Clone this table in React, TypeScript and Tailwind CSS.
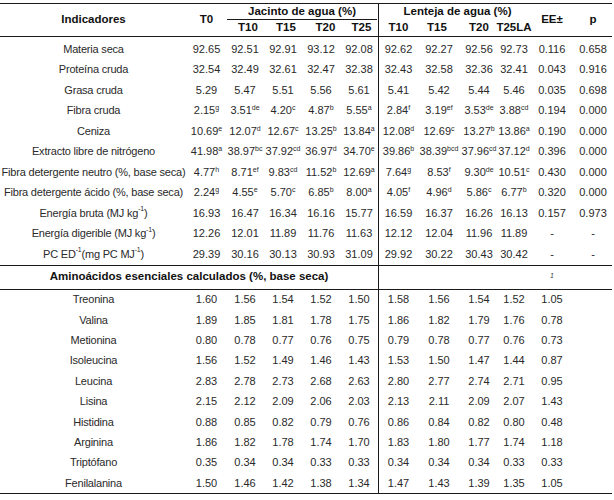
import React from "react";

const COLS =
  "grid grid-cols-[187px_39px_38px_38px_38px_38px_40px_42px_38px_32px_44px_38px]";

function Val({ v }: { v: string }) {
  const [n, s] = v.split("^");
  return (
    <span className="whitespace-nowrap">
      {n}
      {s ? <sup className="text-[7px] top-[-4px]">{s}</sup> : null}
    </span>
  );
}

type RowProps = {
  label: React.ReactNode;
  vals: string[];
  first?: boolean;
  tall?: boolean;
};

function Row({ label, vals, first, tall }: RowProps) {
  return (
    <div className={`${COLS} ${first ? "h-[22.5px]" : tall ? "h-[20.5px]" : "h-[20.4px]"}`}>
      <div
        className={`flex items-center justify-center whitespace-nowrap tracking-[-0.2px] ${first ? "pt-[2px]" : ""}`}
      >
        {label}
      </div>
      {vals.map((v, i) => (
        <div
          key={i}
          className={`flex items-center justify-center ${i === 5 ? "border-l border-[#1a1a1a]" : ""} ${first ? "pt-[2px]" : ""}`}
        >
          <Val v={v} />
        </div>
      ))}
    </div>
  );
}

const m1 = <sup className="text-[7px] top-[-4px]">-1</sup>;

const main: { label: React.ReactNode; vals: string[] }[] = [
  { label: "Materia seca", vals: ["92.65", "92.51", "92.91", "93.12", "92.08", "92.62", "92.27", "92.56", "92.73", "0.116", "0.658"] },
  { label: "Proteína cruda", vals: ["32.54", "32.49", "32.61", "32.47", "32.38", "32.43", "32.58", "32.36", "32.41", "0.043", "0.916"] },
  { label: "Grasa cruda", vals: ["5.29", "5.47", "5.51", "5.56", "5.61", "5.41", "5.42", "5.44", "5.46", "0.035", "0.698"] },
  { label: "Fibra cruda", vals: ["2.15^g", "3.51^de", "4.20^c", "4.87^b", "5.55^a", "2.84^f", "3.19^ef", "3.53^de", "3.88^cd", "0.194", "0.000"] },
  { label: "Ceniza", vals: ["10.69^e", "12.07^d", "12.67^c", "13.25^b", "13.84^a", "12.08^d", "12.69^c", "13.27^b", "13.86^a", "0.190", "0.000"] },
  { label: "Extracto libre de nitrógeno", vals: ["41.98^a", "38.97^bc", "37.92^cd", "36.97^d", "34.70^e", "39.86^b", "38.39^bcd", "37.96^cd", "37.12^d", "0.396", "0.000"] },
  { label: "Fibra detergente neutro (%, base seca)", vals: ["4.77^h", "8.71^ef", "9.83^cd", "11.52^b", "12.69^a", "7.64^g", "8.53^f", "9.30^de", "10.51^c", "0.430", "0.000"] },
  { label: "Fibra detergente ácido (%, base seca)", vals: ["2.24^g", "4.55^e", "5.70^c", "6.85^b", "8.00^a", "4.05^f", "4.96^d", "5.86^c", "6.77^b", "0.320", "0.000"] },
  { label: <>Energía bruta (MJ kg{m1})</>, vals: ["16.93", "16.47", "16.34", "16.16", "15.77", "16.59", "16.37", "16.26", "16.13", "0.157", "0.973"] },
  { label: <>Energía digerible (MJ kg{m1})</>, vals: ["12.26", "12.01", "11.89", "11.76", "11.63", "12.12", "12.04", "11.96", "11.89", "-", "-"] },
  { label: <>PC ED{m1} (mg PC MJ{m1})</>, vals: ["29.39", "30.16", "30.13", "30.93", "31.09", "29.92", "30.22", "30.43", "30.42", "-", "-"] },
];

const amino: [string, string[]][] = [
  ["Treonina", ["1.60", "1.56", "1.54", "1.52", "1.50", "1.58", "1.56", "1.54", "1.52", "1.05", ""]],
  ["Valina", ["1.89", "1.85", "1.81", "1.78", "1.75", "1.86", "1.82", "1.79", "1.76", "0.78", ""]],
  ["Metionina", ["0.80", "0.78", "0.77", "0.76", "0.75", "0.79", "0.78", "0.77", "0.76", "0.73", ""]],
  ["Isoleucina", ["1.56", "1.52", "1.49", "1.46", "1.43", "1.53", "1.50", "1.47", "1.44", "0.87", ""]],
  ["Leucina", ["2.83", "2.78", "2.73", "2.68", "2.63", "2.80", "2.77", "2.74", "2.71", "0.95", ""]],
  ["Lisina", ["2.15", "2.12", "2.09", "2.06", "2.03", "2.13", "2.11", "2.09", "2.07", "1.43", ""]],
  ["Histidina", ["0.88", "0.85", "0.82", "0.79", "0.76", "0.86", "0.84", "0.82", "0.80", "0.48", ""]],
  ["Arginina", ["1.86", "1.82", "1.78", "1.74", "1.70", "1.83", "1.80", "1.77", "1.74", "1.18", ""]],
  ["Triptófano", ["0.35", "0.34", "0.34", "0.33", "0.33", "0.34", "0.34", "0.34", "0.33", "0.33", ""]],
  ["Fenilalanina", ["1.50", "1.46", "1.42", "1.38", "1.34", "1.47", "1.43", "1.39", "1.35", "1.05", ""]],
];

export default function App() {
  const hc = "flex items-center justify-center whitespace-nowrap font-bold text-[11.5px] text-[#111]";
  return (
    <div className="w-[614px] h-[500px] bg-white font-['Liberation_Sans',Arial,sans-serif] text-[11px] leading-none text-[#2a2a2a]">
      <div className="w-[612px] pt-[3px]">
        {/* Header */}
        <div className={`${COLS} grid-rows-[16px_16px] border-y border-[#1a1a1a]`}>
          <div className={`${hc} row-span-2`}>Indicadores</div>
          <div className={`${hc} row-span-2`}>T0</div>
          <div className={`${hc} col-span-4 mx-[1px] border-b border-[#1a1a1a]`}>Jacinto de agua (%)</div>
          <div className={`${hc} col-span-4 border-l border-[#1a1a1a] pl-[6px]`}>Lenteja de agua (%)</div>
          <div className={`${hc} row-span-2 pb-[1px]`}>EE±</div>
          <div className={`${hc} row-span-2`}>p</div>
          <div className={`${hc} pl-[6px]`}>T10</div>
          <div className={`${hc} pl-[6px]`}>T15</div>
          <div className={`${hc} pl-[9px]`}>T20</div>
          <div className={`${hc} pl-[5px]`}>T25</div>
          <div className={`${hc} border-l border-[#1a1a1a]`}>T10</div>
          <div className={`${hc} pr-[4px]`}>T15</div>
          <div className={`${hc}`}>T20</div>
          <div className={`${hc}`}>T25LA</div>
        </div>

        {/* Main block */}
        <div className="flex flex-col">
          {main.map((r, i) => (
            <Row key={i} label={r.label} vals={r.vals} first={i === 0} tall />
          ))}
        </div>

        {/* Amino acid heading */}
        <div className={`${COLS} h-[25px] border-y border-[#1a1a1a]`}>
          <div className="col-span-6 flex items-center justify-center whitespace-nowrap font-bold text-[11.5px] text-[#111]">
            Aminoácidos esenciales calculados (%, base seca)
          </div>
          <div className="border-l border-[#1a1a1a]" />
          <div />
          <div />
          <div />
          <div className="flex items-center justify-center pb-[3px]">
            <span className="italic text-[7px] text-[#444]">1</span>
          </div>
          <div />
        </div>

        {/* Amino rows */}
        <div className="flex flex-col border-b border-[#1a1a1a]">
          {amino.map(([l, v], i) => (
            <Row key={i} label={l} vals={v} />
          ))}
        </div>
      </div>
    </div>
  );
}
